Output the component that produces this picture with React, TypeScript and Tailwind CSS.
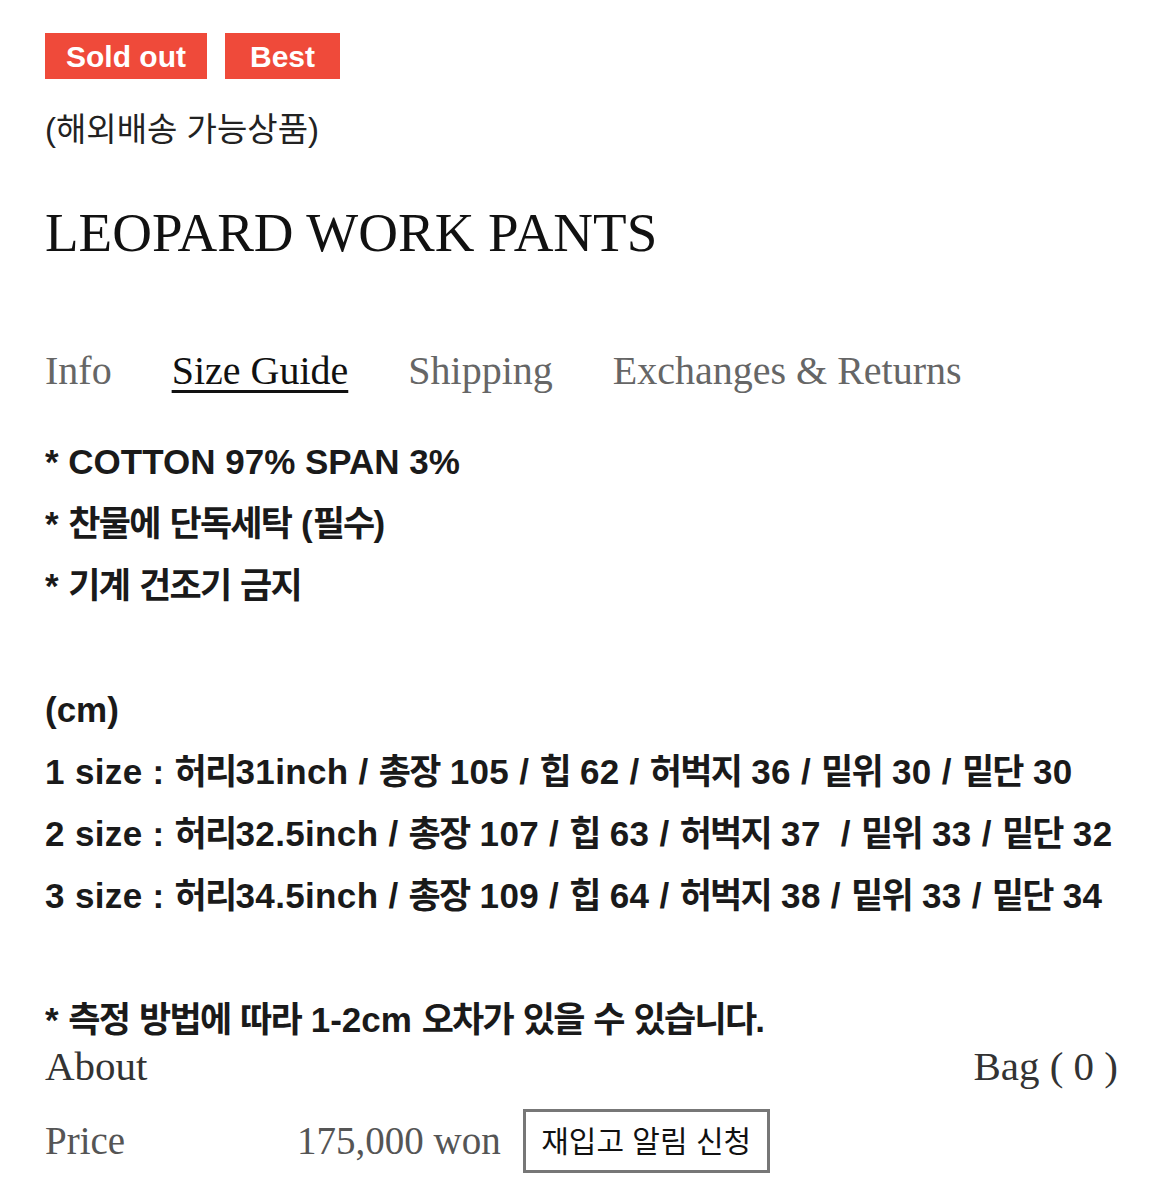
import React from 'react';

const tabs = ['Info', 'Size Guide', 'Shipping', 'Exchanges & Returns'];

const careLines = ['* COTTON 97% SPAN 3%', '* 찬물에 단독세탁 (필수)', '* 기계 건조기 금지'];

const sizeLines = [
  '1 size : 허리31inch / 총장 105 / 힙 62 / 허벅지 36 / 밑위 30 / 밑단 30',
  '2 size : 허리32.5inch / 총장 107 / 힙 63 / 허벅지 37  / 밑위 33 / 밑단 32',
  '3 size : 허리34.5inch / 총장 109 / 힙 64 / 허벅지 38 / 밑위 33 / 밑단 34',
];

// hangul glyphs in the fallback font run a bit wide, tighten only those runs
const Line: React.FC<{ text: string; loose?: boolean }> = ({ text, loose }) => {
  const parts = text.split(/([\uac00-\ud7a3]+)/);
  return (
    <p className="whitespace-pre">
      {parts.map((p, i) =>
        /[\uac00-\ud7a3]/.test(p) ? (
          <span key={i} className="tracking-[-0.05em]">{p}</span>
        ) : (
          <span key={i} className={loose ? 'tracking-[0.01em]' : ''}>{p}</span>
        )
      )}
    </p>
  );
};

const App: React.FC = () => {
  return (
    <div className="w-[1164px] h-[1200px] bg-white overflow-hidden pl-[45px] pr-[46px] font-['Liberation_Sans','Noto_Sans_CJK_KR',sans-serif]">
      {/* badges */}
      <div className="flex gap-[18px] pt-[33px]">
        <span className="h-[46px] w-[162px] flex items-center justify-center bg-[#ef4a3a] text-white text-[30px] font-bold">Sold out</span>
        <span className="h-[46px] w-[115px] flex items-center justify-center bg-[#ef4a3a] text-white text-[30px] font-bold">Best</span>
      </div>

      <p className="mt-[31px] text-[33px] leading-[40px] text-[#222]">(해외배송 가능상품)</p>

      <h1 className="mt-[51px] text-[55px] leading-[64px] text-[#111] font-['Liberation_Serif',serif]">LEOPARD WORK PANTS</h1>

      {/* tabs */}
      <div className="flex gap-[60px] mt-[82px] text-[40px] leading-[48px] font-['Liberation_Serif',serif]">
        {tabs.map(t => (
          <span
            key={t}
            className={t === 'Size Guide' ? 'text-[#111] underline decoration-[3px] underline-offset-[6px]' : 'text-[#666]'}
          >
            {t}
          </span>
        ))}
      </div>

      {/* size guide content */}
      <div className="mt-[36px] text-[35px] leading-[62px] font-bold text-[#1a1a1a]">
        {careLines.map(l => <Line key={l} text={l} />)}
        <p>&nbsp;</p>
        <p>(cm)</p>
        {sizeLines.map(l => <Line key={l} text={l} loose />)}
        <p>&nbsp;</p>
        <Line text="* 측정 방법에 따라 1-2cm 오차가 있을 수 있습니다." />
      </div>

      {/* about / bag */}
      <div className="flex justify-between items-center -mt-[5px] text-[41px] leading-[40px] text-[#333] font-['Liberation_Serif',serif]">
        <span>About</span>
        <span>Bag ( 0 )</span>
      </div>

      <div className="flex items-center mt-[23px]">
        <span className="w-[252px] text-[39px] text-[#555] font-['Liberation_Serif',serif]">Price</span>
        <span className="text-[39px] text-[#555] font-['Liberation_Serif',serif]">175,000 won</span>
        <button className="ml-[22px] h-[64px] w-[247px] border-[3px] border-[#777] text-[30px] text-[#111] flex items-center justify-center">
          재입고 알림 신청
        </button>
      </div>
    </div>
  );
};

export default App;
